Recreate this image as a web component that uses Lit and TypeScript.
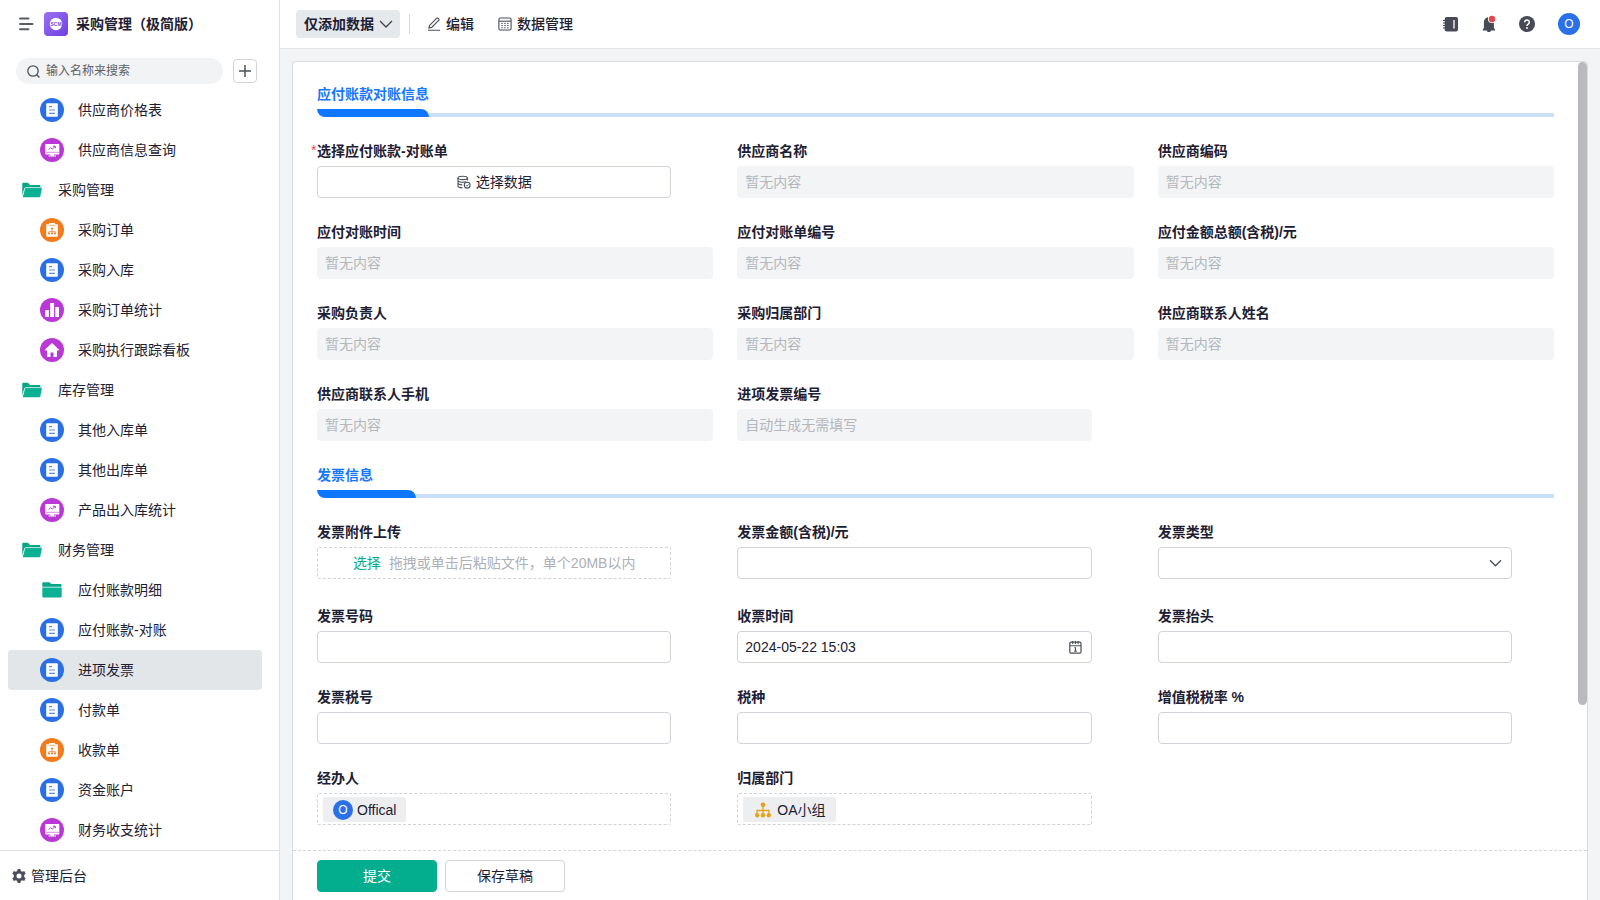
import { LitElement, html, svg, css, nothing } from "lit";
import { customElement, state } from "lit/decorators.js";
import { classMap } from "lit/directives/class-map.js";

type IconName = "doc" | "screen" | "board" | "bars" | "home" | "open" | "folder";

interface NavItem {
  label: string;
  icon: IconName;
  top?: boolean;
}

interface Field {
  label: string;
  kind: "pick" | "linked" | "auto" | "upload" | "text" | "select" | "date" | "member" | "dept";
  value?: string;
  required?: boolean;
}

interface Section {
  title: string;
  fields: Field[];
}

const NAV: NavItem[] = [
  { label: "供应商价格表", icon: "doc" },
  { label: "供应商信息查询", icon: "screen" },
  { label: "采购管理", icon: "open", top: true },
  { label: "采购订单", icon: "board" },
  { label: "采购入库", icon: "doc" },
  { label: "采购订单统计", icon: "bars" },
  { label: "采购执行跟踪看板", icon: "home" },
  { label: "库存管理", icon: "open", top: true },
  { label: "其他入库单", icon: "doc" },
  { label: "其他出库单", icon: "doc" },
  { label: "产品出入库统计", icon: "screen" },
  { label: "财务管理", icon: "open", top: true },
  { label: "应付账款明细", icon: "folder" },
  { label: "应付账款-对账", icon: "doc" },
  { label: "进项发票", icon: "doc" },
  { label: "付款单", icon: "doc" },
  { label: "收款单", icon: "board" },
  { label: "资金账户", icon: "doc" },
  { label: "财务收支统计", icon: "screen" },
];

const SECTIONS: Section[] = [
  {
    title: "应付账款对账信息",
    fields: [
      { label: "选择应付账款-对账单", kind: "pick", required: true },
      { label: "供应商名称", kind: "linked" },
      { label: "供应商编码", kind: "linked" },
      { label: "应付对账时间", kind: "linked" },
      { label: "应付对账单编号", kind: "linked" },
      { label: "应付金额总额(含税)/元", kind: "linked" },
      { label: "采购负责人", kind: "linked" },
      { label: "采购归属部门", kind: "linked" },
      { label: "供应商联系人姓名", kind: "linked" },
      { label: "供应商联系人手机", kind: "linked" },
      { label: "进项发票编号", kind: "auto" },
    ],
  },
  {
    title: "发票信息",
    fields: [
      { label: "发票附件上传", kind: "upload" },
      { label: "发票金额(含税)/元", kind: "text" },
      { label: "发票类型", kind: "select" },
      { label: "发票号码", kind: "text" },
      { label: "收票时间", kind: "date", value: "2024-05-22 15:03" },
      { label: "发票抬头", kind: "text" },
      { label: "发票税号", kind: "text" },
      { label: "税种", kind: "text" },
      { label: "增值税税率 %", kind: "text" },
      { label: "经办人", kind: "member", value: "Offical" },
      { label: "归属部门", kind: "dept", value: "OA小组" },
    ],
  },
];

const glyphs: Record<IconName, unknown> = {
  doc: svg`<circle cx="12" cy="12" r="12" fill="#2a6fe3"/>
    <rect x="6.2" y="5.300" width="11.600" height="13.500" rx="1" fill="#fff"/>
    <path d="M9 8.700h3M9 12h6M9 15.300h6" stroke="#5b92ea" stroke-width="1.200"/>`,
  screen: svg`<circle cx="12" cy="12" r="12" fill="#ba38d6"/>
    <path d="M6 6h12.500a.8.8 0 0 1 .8.8v8.900a.8.8 0 0 1-.8.8H14v1h2v1H8.500v-1h2v-1H6a.8.8 0 0 1-.8-.8V6.800A.8.8 0 0 1 6 6z" fill="#fff"/>
    <path d="M8.700 11.600l2-2 1.600 1.600 2.700-2.800M13 8.200h2.300v2.200" fill="none" stroke="#ba38d6" stroke-width="1"/>
    <path d="M5.500 14.300h13.600" stroke="#ba38d6" stroke-width=".6"/>`,
  board: svg`<circle cx="12" cy="12" r="12" fill="#f27b1d"/>
    <path d="M7 6.300h2V5.100h6v1.200h2a.8.8 0 0 1 .8.8v10.900a.8.8 0 0 1-.8.8H7a.8.8 0 0 1-.8-.8V7.100a.8.8 0 0 1 .8-.8z" fill="#fff"/>
    <path d="M9.300 7.300h5.400M12 10.500v4.800M8.900 15.300v-1.700h6.200v1.700" fill="none" stroke="#f27b1d" stroke-width=".7"/>
    <circle cx="12" cy="10.500" r="1" fill="#f27b1d"/><circle cx="9" cy="15.500" r="1" fill="#f27b1d"/>
    <circle cx="12" cy="15.500" r="1" fill="#f27b1d"/><circle cx="15" cy="15.500" r="1" fill="#f27b1d"/>`,
  bars: svg`<circle cx="12" cy="12" r="12" fill="#ba38d6"/>
    <rect x="5.200" y="12" width="3.700" height="7" rx=".6" fill="#fff"/>
    <rect x="10.200" y="5" width="3.900" height="14" rx=".6" fill="#fff"/>
    <rect x="15.300" y="9" width="3.700" height="10" rx=".6" fill="#fff"/>`,
  home: svg`<circle cx="12" cy="12" r="12" fill="#ba38d6"/>
    <path d="M12 5l7.200 6.700-.7.900h-1.500v5.600a.8.8 0 0 1-.8.8h-2.700v-4.500h-3V19H7.800a.8.8 0 0 1-.8-.8v-5.600H5.500l-.7-.9z" fill="#fff"/>`,
  open: svg`<path d="M2.300 17.500V5.800a1 1 0 0 1 1-1h4.600l2.200 2.200h9.300a1 1 0 0 1 1 1v1.400H6.200a2 2 0 0 0-1.900 1.400z" fill="#03a688"/>
    <path d="M6 9.600h14.800a1 1 0 0 1 1 1.200l-1.500 7.700a1 1 0 0 1-1 .8H3.400a.6.600 0 0 1-.6-.8l2-7.900A1.300 1.300 0 0 1 6 9.600z" fill="#0bb193"/>
    <path d="M2.800 17.800l1.900-7.300a1.300 1.300 0 0 1 1.200-.9h14.900" fill="none" stroke="#c9f0e8" stroke-width=".8"/>`,
  folder: svg`<path d="M2.300 8.700V5.300a1 1 0 0 1 1-1h6l2 1.700h9.200a1 1 0 0 1 1 1v1.700z" fill="#03a688"/>
    <path d="M2.300 9.600h19.400v8.600a1.300 1.300 0 0 1-1.300 1.300H3.600a1.300 1.300 0 0 1-1.300-1.300z" fill="#0bb193"/>`,
};

@customElement("app-nav")
export class AppNav extends LitElement {
  @state() private current = "进项发票";

  static styles = css`
    :host {
      display: flex;
      flex-direction: column;
      flex: 0 0 280px;
      box-sizing: border-box;
      min-height: 0;
      border-right: 1px solid #dfe1e4;
      background: #fff;
    }
    svg {
      display: block;
      flex: none;
    }
    button,
    input {
      font: inherit;
      color: inherit;
    }
    .head {
      display: flex;
      align-items: center;
      height: 48px;
      padding-left: 18px;
      flex: none;
    }
    .plain {
      padding: 0;
      border: 0;
      background: none;
    }
    .logo {
      display: grid;
      place-items: center;
      width: 24px;
      height: 24px;
      margin: 0 8px 0 10px;
      border-radius: 4px;
      background: linear-gradient(135deg, #9a72f2, #6f3fe0);
    }
    .logo svg text {
      font: 700 5px "Liberation Sans", sans-serif;
    }
    .title {
      margin: 0;
      font-size: 14px;
      font-weight: 600;
    }
    .find {
      display: flex;
      align-items: center;
      gap: 10px;
      padding: 10px 22px 6px 16px;
      flex: none;
    }
    .search {
      display: flex;
      align-items: center;
      flex: 1;
      min-width: 0;
      gap: 5px;
      height: 26px;
      padding: 0 12px 0 10px;
      border-radius: 13px;
      background: #f1f3f5;
    }
    .search input {
      flex: 1;
      min-width: 0;
      padding: 0;
      border: 0;
      outline: 0;
      background: none;
      font-size: 12px;
    }
    .search input::placeholder {
      color: #5d6067;
    }
    .add {
      display: grid;
      place-items: center;
      width: 24px;
      height: 24px;
      padding: 0;
      border: 1px solid #d2d5d8;
      border-radius: 4px;
      background: #fff;
    }
    .list {
      flex: 1;
      min-height: 0;
      margin: 0;
      padding: 0 17px 0 8px;
      overflow: hidden;
      list-style: none;
    }
    .item {
      display: flex;
      align-items: center;
      gap: 14px;
      height: 40px;
      padding-left: 32px;
      border-radius: 4px;
      color: inherit;
      text-decoration: none;
    }
    .item.top {
      padding-left: 12px;
    }
    .item.on {
      background: #e3e6e8;
    }
    .foot {
      display: flex;
      align-items: center;
      flex: none;
      gap: 4px;
      height: 49px;
      padding-left: 11px;
      border-top: 1px solid #dfe1e4;
      color: inherit;
      text-decoration: none;
    }
  `;

  render() {
    return html`
      <header class="head">
        <button class="plain" aria-label="收起导航">
          <svg width="16" height="16" viewBox="0 0 16 16" fill="none" stroke="#5a5d64" stroke-width="1.900" stroke-linecap="round">
            <path d="M2 2.500h8.500M2 8h12.500M2 13.300h8.500" />
          </svg>
        </button>
        <span class="logo">
          <svg width="16" height="16" viewBox="0 0 16 16">
            <circle cx="8" cy="8" r="6.200" fill="#fff" />
            <text x="8" y="9.800" text-anchor="middle" fill="#7a4be6">SCM</text>
          </svg>
        </span>
        <h1 class="title">采购管理（极简版）</h1>
      </header>
      <div class="find">
        <label class="search">
          <svg width="15" height="15" viewBox="0 0 15 15" fill="none" stroke="#4e5158" stroke-width="1.300">
            <circle cx="7" cy="7" r="5.200" /><path d="M10.800 10.800l2.700 2.700" />
          </svg>
          <input type="text" placeholder="输入名称来搜索" aria-label="输入名称来搜索" />
        </label>
        <button class="add" aria-label="新建">
          <svg width="14" height="14" viewBox="0 0 14 14" stroke="#4e5158" stroke-width="1.500"><path d="M1 7h12M7 1v12" /></svg>
        </button>
      </div>
      <ul class="list">
        ${NAV.map(
          (n) => html`<li>
            <a
              href="#"
              class=${classMap({ item: true, top: !!n.top, on: n.label === this.current })}
              @click=${(e: Event) => {
                e.preventDefault();
                if (!n.top) this.current = n.label;
              }}
            >
              <svg width="24" height="24" viewBox="0 0 24 24">${glyphs[n.icon]}</svg>
              <span>${n.label}</span>
            </a>
          </li>`
        )}
      </ul>
      <a class="foot" href="#">
        <svg width="16" height="16" viewBox="0 0 16 16">
          <path
            fill="#4b4f59"
            fill-rule="evenodd"
            d="M6.600 1h2.800l.4 1.900 1.500.9 1.900-.7 1.400 2.500-1.400 1.300v2.200l1.400 1.300-1.400 2.500-1.900-.7-1.500.9-.4 1.900H6.600l-.4-1.900-1.500-.9-1.900.7-1.400-2.500 1.400-1.300V6.900L1.400 5.600l1.400-2.500 1.900.7 1.500-.9zM8 5.500a2.500 2.500 0 1 0 0 5 2.500 2.500 0 0 0 0-5z"
          />
        </svg>
        <span>管理后台</span>
      </a>
    `;
  }
}

@customElement("app-bar")
export class AppBar extends LitElement {
  static styles = css`
    :host {
      display: flex;
      align-items: center;
      justify-content: space-between;
      flex: none;
      height: 48px;
      padding: 0 20px 0 16px;
      border-bottom: 1px solid #e3e5e8;
      background: #fff;
    }
    svg {
      display: block;
      flex: none;
    }
    .group,
    .tools {
      display: flex;
      align-items: center;
    }
    button {
      display: flex;
      align-items: center;
      gap: 5px;
      padding: 0;
      border: 0;
      background: none;
      font: inherit;
      color: inherit;
    }
    .mode {
      height: 28px;
      padding: 0 7px 0 8px;
      border-radius: 4px;
      background: #e6e9eb;
      font-weight: 600;
    }
    .rule {
      width: 1px;
      height: 20px;
      margin: 0 17px 0 9px;
      background: #d5d7da;
    }
    .action {
      margin-right: 24px;
      font-weight: 500;
    }
    .tools {
      gap: 20px;
    }
    .tools .avatar {
      justify-content: center;
      width: 22px;
      height: 22px;
      margin-left: 2px;
      border-radius: 50%;
      background: #2a70e8;
      color: #fff;
      font-size: 12px;
    }
  `;

  render() {
    return html`
      <div class="group">
        <button class="mode">
          仅添加数据
          <svg width="14" height="14" viewBox="0 0 14 14" fill="none" stroke="#3f424a" stroke-width="1.300"><path d="M1 4l6 6 6-6" /></svg>
        </button>
        <span class="rule"></span>
        <button class="action">
          <svg width="14" height="14" viewBox="0 0 14 14" fill="none" stroke="#4b4f59" stroke-width="1.100">
            <path d="M1 13.300h12M2.600 8.300L9.800 1.100a.8.8 0 0 1 1.100 0l1 1a.8.8 0 0 1 0 1.100L4.700 10.400l-2.800.7z" />
          </svg>
          编辑
        </button>
        <button class="action">
          <svg width="14" height="14" viewBox="0 0 14 14" fill="none" stroke="#4b4f59" stroke-width="1.100">
            <rect x=".9" y="1" width="12.200" height="12" rx="1.500" />
            <path d="M1 4.200h12" />
            <path d="M3.300 6.400h7.500M3.300 8.600h7.500M3.300 10.800h7.500" stroke-dasharray="1.500 1.400" stroke-width="1" />
          </svg>
          数据管理
        </button>
      </div>
      <div class="tools">
        <button aria-label="通讯录">
          <svg width="18" height="18" viewBox="0 0 18 18">
            <rect x="2.700" y="2" width="13.300" height="14.500" rx="2" fill="#474b55" />
            <path d="M1 5.500h3M1 8h3M1 10.500h3M1 13h3" stroke="#474b55" stroke-width="1.200" />
            <path d="M12 5v8.500" stroke="#dfe0e3" stroke-width="1.600" />
          </svg>
        </button>
        <button aria-label="消息">
          <svg width="18" height="18" viewBox="0 0 18 18">
            <path d="M8.900 2.200c3.200 0 5 2.300 5 5V13l1.200 1.800v.7h-4c-.3.900-1.200 1.600-2.200 1.600s-1.900-.7-2.200-1.600H2.700v-.7L3.900 13V7.200c0-2.700 1.800-5 5-5z" fill="#474b55" />
            <circle cx="12" cy="4" r="4.100" fill="#fff" /><circle cx="12" cy="4" r="3.200" fill="#e5484d" />
          </svg>
        </button>
        <button aria-label="帮助">
          <svg width="18" height="18" viewBox="0 0 18 18">
            <circle cx="9" cy="9" r="8" fill="#474b55" />
            <path d="M6.700 7.200a2.300 2.300 0 1 1 3.500 2c-.8.500-1.200.8-1.200 1.700" fill="none" stroke="#fff" stroke-width="1.500" />
            <circle cx="9" cy="13" r=".9" fill="#fff" />
          </svg>
        </button>
        <button class="avatar" aria-label="账户">O</button>
      </div>
    `;
  }
}

@customElement("app-form")
export class AppForm extends LitElement {
  static styles = css`
    :host {
      display: flex;
      flex-direction: column;
      flex: 1;
      min-height: 0;
      margin: 12px 12px 0;
      border: 1px solid #d9dce0;
      border-bottom: 0;
      border-radius: 4px 4px 0 0;
      background: #fff;
    }
    * {
      box-sizing: border-box;
    }
    svg {
      display: block;
      flex: none;
    }
    .scroll {
      flex: 1;
      min-height: 0;
      overflow: hidden;
      position: relative;
    }
    .thumb {
      position: absolute;
      top: 0;
      right: 0;
      width: 9px;
      height: 81.6%;
      border-radius: 5px;
      background: #b9babd;
    }
    .grid {
      display: grid;
      grid-template-columns: repeat(3, minmax(0, 1fr));
      gap: 23px 24px;
      padding: 21px 33px 24px 24px;
    }
    .section {
      grid-column: 1 / -1;
      display: grid;
      grid-template-columns: auto 1fr;
      row-gap: 4px;
      margin: 0;
      color: #1677ff;
      font-size: 14px;
      font-weight: 600;
      line-height: 22px;
    }
    .rest {
      grid-column: 2;
    }
    .tab {
      min-width: 99px;
      height: 8px;
      border-radius: 0 8px 0 8px;
      background: #0f76ff;
    }
    .line {
      align-self: end;
      height: 4px;
      background: #c9e0f8;
    }
    .field {
      display: flex;
      flex-direction: column;
      gap: 4px;
      min-width: 0;
      position: relative;
    }
    .label {
      font-weight: 600;
      line-height: 22px;
    }
    .star {
      position: absolute;
      left: -6px;
      top: 0;
      color: #e5484d;
    }
    .box {
      display: flex;
      align-items: center;
      width: 100%;
      height: 32px;
      padding: 0 7px;
      border: 1px solid #d0d3d7;
      border-radius: 4px;
      background: #fff;
      color: inherit;
      font: inherit;
      outline: 0;
    }
    .short {
      width: calc(100% - 42px);
    }
    .flat {
      border-color: #f2f4f5;
      background: #f2f4f5;
    }
    .box::placeholder {
      color: #b4b7bc;
    }
    .pick {
      justify-content: center;
      gap: 5px;
    }
    .dashed {
      border-style: dashed;
      border-radius: 2px;
    }
    .upload {
      justify-content: center;
      gap: 8px;
      margin-bottom: 3px;
      color: #adb0b6;
    }
    .choose {
      color: #03ae8f;
    }
    .wrap {
      position: relative;
    }
    select.box {
      appearance: none;
    }
    .mark {
      position: absolute;
      right: 9px;
      top: 9px;
      pointer-events: none;
    }
    .people {
      padding: 1px 5px 0;
    }
    .tag {
      display: flex;
      align-items: center;
      gap: 4px;
      height: 25px;
      padding: 0 10px;
      border: 0;
      border-radius: 2px;
      background: #eceef0;
      color: inherit;
      font: inherit;
    }
    .face {
      display: grid;
      place-items: center;
      width: 20px;
      height: 20px;
      border-radius: 50%;
      background: #2a70e8;
      color: #fff;
      font-size: 12px;
      line-height: 20px;
    }
    .foot {
      display: flex;
      flex: none;
      gap: 8px;
      height: 50px;
      padding: 9px 24px 0;
      border-top: 1px dashed #d5d7da;
    }
    .btn {
      width: 120px;
      height: 32px;
      padding: 0;
      border: 1px solid #d0d3d7;
      border-radius: 4px;
      background: #fff;
      color: inherit;
      font: inherit;
    }
    .primary {
      border-color: #03ae8f;
      background: #03ae8f;
      color: #fff;
    }
  `;

  private control(f: Field, id: string) {
    switch (f.kind) {
      case "pick":
        return html`<button id=${id} type="button" class="box short pick">
          <svg width="14" height="14" viewBox="0 0 14 14" fill="none" stroke="#4b4f59" stroke-width="1.100">
            <ellipse cx="5.700" cy="2.900" rx="4.700" ry="1.700" />
            <path d="M1 2.900v8.200c0 1 1.700 1.700 4.500 1.800M10.400 2.900v2.700M1 5.700c.6 1 2.400 1.500 4.700 1.500 1.400 0 2.600-.2 3.500-.5M1 8.400c.6 1 2.200 1.500 4.300 1.500" />
            <circle cx="10.200" cy="10.200" r="2.900" /><path d="M8.900 10.200l1 1 1.600-1.800" stroke-width=".9" />
          </svg>
          选择数据
        </button>`;
      case "linked":
        return html`<input id=${id} class="box flat" disabled placeholder="暂无内容" />`;
      case "auto":
        return html`<input id=${id} class="box flat short" disabled placeholder="自动生成无需填写" />`;
      case "upload":
        return html`<button id=${id} type="button" class="box short dashed upload">
          <span class="choose">选择</span><span>拖拽或单击后粘贴文件，单个20MB以内</span>
        </button>`;
      case "select":
        return html`<div class="wrap short">
          <select id=${id} class="box"><option></option></select>
          <svg class="mark" width="14" height="14" viewBox="0 0 14 14" fill="none" stroke="#4b4f59" stroke-width="1.300">
            <path d="M1 4.300l5.500 5.500L12 4.300" />
          </svg>
        </div>`;
      case "date":
        return html`<div class="wrap short">
          <input id=${id} class="box" type="text" .value=${f.value ?? ""} />
          <svg class="mark" width="14" height="14" viewBox="0 0 14 14" fill="none" stroke="#4b4f59" stroke-width="1.200">
            <rect x=".8" y="2.200" width="11.200" height="10.900" rx="1.200" />
            <path d="M.8 5.800H12M3.700 1v3M6.400 1v3M9.100 1v3M5.300 7.800h1.200v3.300M5.100 11.100h2.600" stroke-width="1.100" />
          </svg>
        </div>`;
      case "member":
        return html`<div class="box short dashed people">
          <button id=${id} type="button" class="tag"><span class="face">O</span>${f.value}</button>
        </div>`;
      case "dept":
        return html`<div class="box short dashed people">
          <button id=${id} type="button" class="tag">
            <svg width="20" height="20" viewBox="0 0 20 20" fill="#e6a21a">
              <path d="M10 5v10M4 15v-4.500h12V15" fill="none" stroke="#e6a21a" stroke-width="1.300" />
              <circle cx="10" cy="4.800" r="2.400" /><circle cx="4.200" cy="15.200" r="2.200" />
              <circle cx="10" cy="15.200" r="2.200" /><circle cx="15.800" cy="15.200" r="2.200" />
            </svg>
            ${f.value}
          </button>
        </div>`;
      default:
        return html`<input id=${id} class="box short" type="text" />`;
    }
  }

  render() {
    return html`
      <div class="scroll">
        <form class="grid" id="invoice" @submit=${(e: Event) => e.preventDefault()}>
          ${SECTIONS.map(
            (s, si) => html`
              <h2 class="section">
                <span>${s.title}</span><span class="rest"></span>
                <span class="tab"></span><span class="line"></span>
              </h2>
              ${s.fields.map(
                (f, fi) => html`<div class="field">
                  ${f.required ? html`<span class="star">*</span>` : nothing}
                  <label class="label" for="f${si}-${fi}">${f.label}</label>
                  ${this.control(f, `f${si}-${fi}`)}
                </div>`
              )}
            `
          )}
        </form>
        <span class="thumb"></span>
      </div>
      <footer class="foot">
        <button class="btn primary" type="submit" form="invoice">提交</button>
        <button class="btn" type="button">保存草稿</button>
      </footer>
    `;
  }
}

@customElement("app-root")
export class AppRoot extends LitElement {
  static styles = css`
    :host {
      display: flex;
      height: 100vh;
      overflow: hidden;
      background: #f2f4f6;
      color: #1d2033;
      font-family: "Liberation Sans", "Noto Sans CJK SC", sans-serif;
      font-size: 14px;
      line-height: 20px;
    }
    .main {
      display: flex;
      flex-direction: column;
      flex: 1;
      min-width: 0;
    }
  `;

  render() {
    return html`
      <app-nav></app-nav>
      <main class="main">
        <app-bar></app-bar>
        <app-form></app-form>
      </main>
    `;
  }
}
